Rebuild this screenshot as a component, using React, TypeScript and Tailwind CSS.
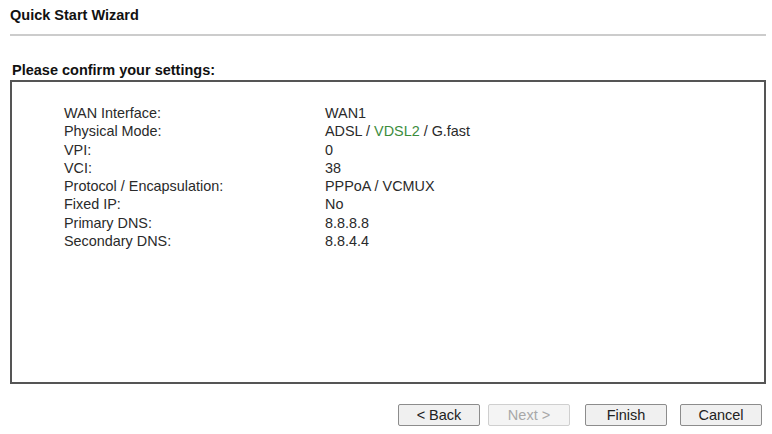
const rows: [string, React.ReactNode][] = [
  ["WAN Interface:", "WAN1"],
  [
    "Physical Mode:",
    <>
      ADSL / <span className="text-[#3c8c3c]">VDSL2</span> / G.fast
    </>,
  ],
  ["VPI:", "0"],
  ["VCI:", "38"],
  ["Protocol / Encapsulation:", "PPPoA / VCMUX"],
  ["Fixed IP:", "No"],
  ["Primary DNS:", "8.8.8.8"],
  ["Secondary DNS:", "8.8.4.4"],
];

function WizardButton({ label, disabled }: { label: string; disabled?: boolean }) {
  return (
    <button
      disabled={disabled}
      className={
        disabled
          ? "w-[82px] h-[22px] border border-[#cfcfcf] bg-[#f4f4f4] text-[#a8a8a8] text-[14.5px] rounded-[2px]"
          : "w-[82px] h-[22px] border border-[#8c8c8c] bg-[#f0f0f0] text-[#222] text-[14.5px] rounded-[2px]"
      }
    >
      {label}
    </button>
  );
}

export default function App() {
  return (
    <div className="w-[772px] h-[434px] bg-white font-['Liberation_Sans',Arial,sans-serif] text-[#222] overflow-hidden">
      <div className="pl-[10px] pr-[6px] pt-[7px]">
        <h1 className="text-[14.5px] font-bold leading-[16px] text-[#111]">Quick Start Wizard</h1>
        <div className="mt-[11px] h-[2px] bg-[#cccccc]" />

        <h2 className="mt-[26px] ml-[2px] text-[14.5px] font-bold leading-[16px] text-[#111]">
          Please confirm your settings:
        </h2>
        <div className="mt-[2px] h-[304px] border-2 border-[#555555] pl-[52px] pt-[22px]">
          <div className="grid grid-cols-[261px_1fr] text-[14.4px] leading-[18.3px] text-[#2a2a2a]">
            {rows.map(([label, value]) => (
              <div key={label} className="contents">
                <div>{label}</div>
                <div>{value}</div>
              </div>
            ))}
          </div>
        </div>

        <div className="mt-[20px] flex justify-end pr-[4px]">
          <div className="flex gap-[8px]">
            <WizardButton label="< Back" />
            <WizardButton label="Next >" disabled />
          </div>
          <div className="ml-[15px] flex gap-[13px]">
            <WizardButton label="Finish" />
            <WizardButton label="Cancel" />
          </div>
        </div>
      </div>
    </div>
  );
}
